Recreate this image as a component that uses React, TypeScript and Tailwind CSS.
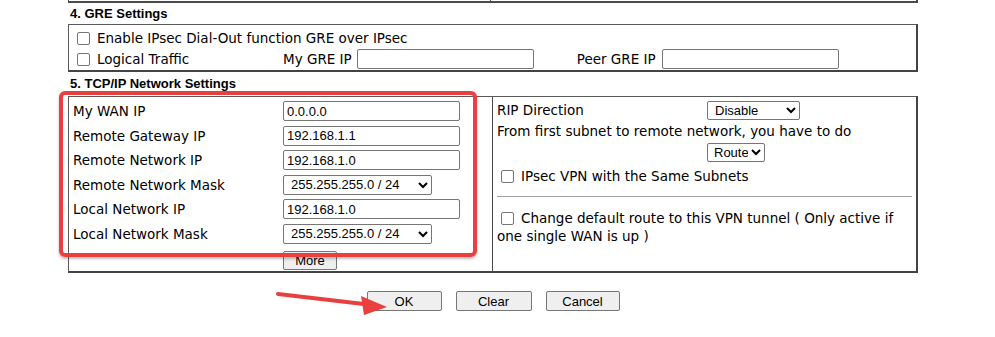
const label = "font-['DejaVu_Sans',Verdana,sans-serif] text-[13.5px] text-black";
const field =
  "h-5 border border-[#767676] rounded-[2px] bg-white px-[3px] font-['Liberation_Sans',Arial,sans-serif] text-[13px] text-black";
const box = "border border-[#5a5a5a] border-r-2 border-b-2 border-r-[#444] border-b-[#444]";

function Check() {
  return (
    <span className="inline-block w-[13px] h-[13px] border border-[#767676] rounded-[2px] bg-white shrink-0" />
  );
}

function MaskSelect() {
  return (
    <select className={`${field} w-[149px]`} defaultValue="24">
      <option value="24">255.255.255.0 / 24</option>
    </select>
  );
}

const leftRows: { name: string; value?: string; mask?: boolean }[] = [
  { name: "My WAN IP", value: "0.0.0.0" },
  { name: "Remote Gateway IP", value: "192.168.1.1" },
  { name: "Remote Network IP", value: "192.168.1.0" },
  { name: "Remote Network Mask", mask: true },
  { name: "Local Network IP", value: "192.168.1.0" },
  { name: "Local Network Mask", mask: true },
];

export default function App() {
  return (
    <div className="relative w-[995px] h-[337px] overflow-hidden bg-white">
      <div className="ml-[68px] w-[850px] flex flex-col">
        {/* tail of previous table */}
        <div className="h-[3px] flex border-l border-b-2 border-r-2 border-[#4a4a4a]">
          <div className="w-[422px] border-r border-[#4a4a4a]" />
        </div>

        <div className="h-[21px] flex items-center pl-[2px] font-['Liberation_Sans',Arial,sans-serif] font-bold text-[13px] text-black">
          4. GRE Settings
        </div>

        <div className={`${box} h-[48px] flex flex-col pt-[3px] pl-[8px]`}>
          <div className="h-[21px] flex items-center gap-[7px]">
            <Check />
            <span className={label}>Enable IPsec Dial-Out function GRE over IPsec</span>
          </div>
          <div className="h-[22px] flex items-center">
            <div className="w-[206px] flex items-center gap-[7px]">
              <Check />
              <span className={label}>Logical Traffic</span>
            </div>
            <span className={`${label} mr-[5px]`}>My GRE IP</span>
            <input className={`${field} w-[177px] h-[20px]`} />
            <span className={`${label} ml-[43px] mr-[6px]`}>Peer GRE IP</span>
            <input className={`${field} w-[177px] h-[20px]`} />
          </div>
        </div>

        <div className="h-[24px] flex items-center pl-[2px] font-['Liberation_Sans',Arial,sans-serif] font-bold text-[13px] text-black">
          5. TCP/IP Network Settings
        </div>

        <div className={`${box} h-[177px] flex`}>
          <div className="w-[424px] border-r border-[#4a4a4a] flex flex-col pt-[2px] pl-[4px]">
            {leftRows.map((r) => (
              <div key={r.name} className="h-[24.6px] flex items-center">
                <span className={`${label} w-[210px]`}>{r.name}</span>
                {r.mask ? (
                  <MaskSelect />
                ) : (
                  <input className={`${field} w-[177px]`} defaultValue={r.value} />
                )}
              </div>
            ))}
            <div className="pl-[210px] pt-[1px]">
              <button className="h-[19px] w-[54px] border border-[#767676] rounded-[2px] bg-[#efefef] font-['Liberation_Sans',Arial,sans-serif] text-[13px] text-black leading-none">
                More
              </button>
            </div>
          </div>

          <div className="flex-1 flex flex-col pt-[3px] pl-[4px] pr-[4px]">
            <div className="h-[21px] flex items-center">
              <span className={`${label} w-[210px]`}>RIP Direction</span>
              <select className={`${field} w-[93px] h-[19px]`} defaultValue="d">
                <option value="d">Disable</option>
              </select>
            </div>
            <div className={`${label} h-[21px] flex items-center`}>
              From first subnet to remote network, you have to do
            </div>
            <div className="h-[21px] flex items-center pl-[210px]">
              <select className={`${field} w-[58px] h-[19px] pl-[2px] pr-0`} defaultValue="r">
                <option value="r">Route</option>
              </select>
            </div>
            <div className="h-[27px] flex items-center gap-[7px] pl-[4px]">
              <Check />
              <span className={label}>IPsec VPN with the Same Subnets</span>
            </div>
            <div className="mt-[6px] mb-[12px] border-t border-[#a0a0a0]" />
            <div className={`${label} leading-[18px]`}>
              <div className="h-[18px] flex items-center gap-[7px] pl-[4px]">
                <Check />
                <span>Change default route to this VPN tunnel ( Only active if</span>
              </div>
              <div>one single WAN is up )</div>
            </div>
          </div>
        </div>

        <div className="mt-[18px] flex justify-center gap-[14px]">
          {[
            ["OK", "w-[75px]"],
            ["Clear", "w-[76px]"],
            ["Cancel", "w-[74px]"],
          ].map(([t, w]) => (
            <button
              key={t}
              className={`${w} h-[20px] border border-[#767676] rounded-[2px] bg-[#efefef] font-['Liberation_Sans',Arial,sans-serif] text-[13px] text-black`}
            >
              {t}
            </button>
          ))}
        </div>
      </div>

      {/* red highlight box */}
      <div className="absolute left-[59px] top-[91px] w-[418px] h-[166px] border-4 border-[#e8403f] rounded-[6px] shadow-[0_2px_3px_rgba(0,0,0,0.25)] pointer-events-none" />

      {/* red arrow */}
      <svg className="absolute left-0 top-0 pointer-events-none" width="995" height="337">
        <line x1="278" y1="294" x2="368" y2="304.5" stroke="#e8403f" strokeWidth="4" strokeLinecap="round" />
        <polygon points="387,307 361,296 364,315" fill="#e8403f" />
      </svg>
    </div>
  );
}
